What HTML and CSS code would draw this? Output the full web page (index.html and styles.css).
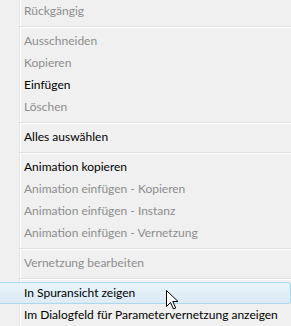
FILE: index.html
```
<!DOCTYPE html>
<html lang="de">
<head>
    <meta charset="UTF-8">
    <title>Kontextmenü</title>
    <link rel="stylesheet" href="styles.css">
</head>
<body>
    <ul class="menu">
        <li class="item disabled">Rückgängig</li>
        <li class="sep"></li>
        <li class="item disabled">Ausschneiden</li>
        <li class="item disabled">Kopieren</li>
        <li class="item">Einfügen</li>
        <li class="item disabled">Löschen</li>
        <li class="sep"></li>
        <li class="item">Alles auswählen</li>
        <li class="sep"></li>
        <li class="item">Animation kopieren</li>
        <li class="item disabled">Animation einfügen - Kopieren</li>
        <li class="item disabled">Animation einfügen - Instanz</li>
        <li class="item disabled">Animation einfügen - Vernetzung</li>
        <li class="sep"></li>
        <li class="item disabled">Vernetzung bearbeiten</li>
        <li class="sep"></li>
        <li class="item hover">In Spuransicht zeigen</li>
        <li class="item">Im Dialogfeld für Parametervernetzung anzeigen</li>
    </ul>

    <!-- mouse pointer -->
    <svg class="cursor" width="13" height="20" viewBox="0 0 13 20">
        <path d="M0.5 0.5 L0.5 16.5 L4.5 12.5 L7.5 19 L9.7 18 L6.8 11.5 L12 11.5 Z"
              fill="#fff" stroke="#000" stroke-width="1" stroke-linejoin="miter"/>
    </svg>
</body>
</html>
```

FILE: styles.css
```
body {
    margin: 0; padding: 0; background: #f0f0f0;
}
.menu {
    list-style: none; margin: 0; padding: 0; width: 291px; height: 326px; overflow: hidden;
    font-family: Lato, "Noto Sans", sans-serif; font-size: 12px; color: #000;
    /* icon gutter line */
    background: linear-gradient(to right, #f0f0f0 19px, #e2e3e3 19px, #e2e3e3 20px, #ffffff 20px, #ffffff 21px, #f0f0f0 21px);
}
.item {
    height: 22px; line-height: 22px; padding-left: 24px; white-space: nowrap; box-sizing: border-box;
}
.item.disabled { color: #8d8d8d; }
.item.hover {
    line-height: 20px; border: 1px solid #a9d9ed; border-left: none; border-radius: 0 3px 3px 0;
    background: linear-gradient(to bottom, rgba(232, 244, 251, 0.85), rgba(216, 234, 246, 0.85));
}
.sep {
    height: 8px; box-sizing: border-box; margin-left: 20px; padding-top: 4px;
}
.sep::before {
    content: ""; display: block; height: 1px; background: #e0e0e0; border-bottom: 1px solid #ffffff;
}
.cursor {
    position: absolute; left: 166px; top: 290px;
}
```
